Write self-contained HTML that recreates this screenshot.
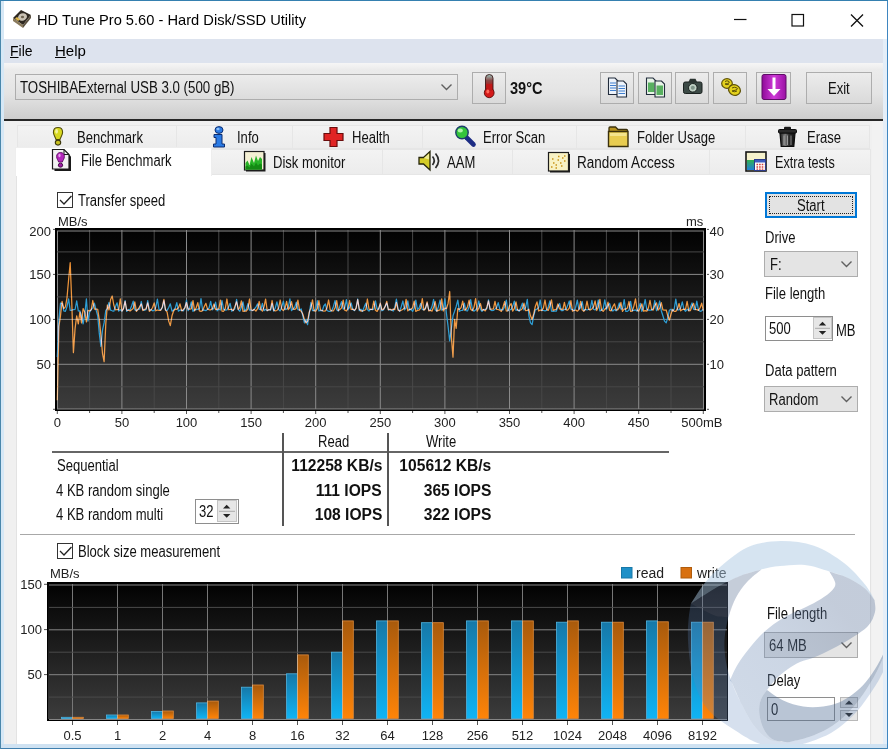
<!DOCTYPE html>
<html><head><meta charset="utf-8"><title>HD Tune Pro 5.60 - Hard Disk/SSD Utility</title>
<style>
html,body{margin:0;padding:0;}
body{width:888px;height:749px;overflow:hidden;position:relative;background:#fff;font-family:"Liberation Sans",sans-serif;color:#000;}
.abs{position:absolute;}
.t{position:absolute;white-space:nowrap;font-size:16px;line-height:18px;transform-origin:0 50%;transform:scaleX(.815);color:#111;margin-top:.8px;}
.b{font-weight:bold;transform:scaleX(.975);}
.r{transform-origin:100% 50%;text-align:right;}
.tab{position:absolute;background:linear-gradient(#f3f3f3,#ececec);border:1px solid #e6e6e6;box-sizing:border-box;}
.btn{position:absolute;box-sizing:border-box;border:1px solid #adadad;background:#e1e1e1;}
.combo{position:absolute;box-sizing:border-box;border:1px solid #adadad;background:#e4e4e4;}
svg{position:absolute;left:0;top:0;}
svg text{font-family:"Liberation Sans",sans-serif;font-size:13px;fill:#222;}
</style></head><body><div id="root" style="position:absolute;left:0;top:0;width:888px;height:749px;will-change:transform">
<!-- window chrome -->
<div class="abs" style="left:0;top:0;width:888px;height:39px;background:#fff"></div>
<div class="abs" style="left:0;top:39px;width:888px;height:23.500px;background:#dde3ee"></div>
<div class="abs" style="left:0;top:62.500px;width:888px;height:56.500px;background:linear-gradient(#f6f6f6,#ebebeb 12%,#e4e4e4 55%,#cdcdcd)"></div>
<div class="abs" style="left:0;top:119px;width:888px;height:1.500px;background:#262626"></div>
<div class="abs" style="left:0;top:120.5px;width:888px;height:630px;background:#f0f0f0"></div>
<!-- tab page -->
<div class="abs" style="left:16px;top:174px;width:855px;height:572px;background:#fff;border-left:1px solid #e3e3e3;border-right:1px solid #e3e3e3;box-sizing:border-box"></div>

<!-- title -->
<svg width="888" height="40" viewBox="0 0 888 40">
 <g transform="translate(12,9)">
  <polygon points="1,9 9,1 19,6 11,16" fill="#2e2820"/>
  <polygon points="1,9 11,16 11,19 1,12" fill="#8a7a5c"/>
  <polygon points="11,16 19,6 19,9 11,19" fill="#5b5140"/>
  <ellipse cx="10.5" cy="8" rx="4.6" ry="3.6" fill="#c9c2b4" transform="rotate(-20 10.5 8)"/>
  <ellipse cx="10.5" cy="8" rx="1.6" ry="1.2" fill="#6d6350"/>
  <polygon points="3,9.5 6,12 8,10.5 5,8" fill="#e0b84a"/>
 </g>
 <line x1="734" y1="19.500" x2="746.500" y2="19.500" stroke="#111" stroke-width="1.2"/>
 <rect x="792" y="14.5" width="11.5" height="11.5" fill="none" stroke="#111" stroke-width="1.2"/>
 <path d="M851 14.5 L863 26.5 M863 14.5 L851 26.5" stroke="#111" stroke-width="1.3" fill="none"/>
</svg>
<div class="t" style="left:36.500px;top:10.200px;font-size:15px;transform:scaleX(.978);color:#000">HD Tune Pro 5.60 - Hard Disk/SSD Utility</div>
<div class="t" style="left:10px;top:41.200px;font-size:15px;transform:scaleX(.93);color:#000"><u>F</u>ile</div>
<div class="t" style="left:55px;top:41.200px;font-size:15px;transform:scaleX(1);color:#000"><u>H</u>elp</div>

<!-- toolbar -->
<div class="combo" style="left:15px;top:74px;width:443px;height:26px;background:linear-gradient(#ececec,#dcdcdc)"></div>
<div class="t" style="left:20px;top:78px;transform:scaleX(.83)">TOSHIBAExternal USB 3.0 (500 gB)</div>
<svg width="888" height="120" viewBox="0 0 888 120">
 <path d="M441.500 84.500 L446.500 89.500 L451.500 84.500" stroke="#606060" stroke-width="1.400" fill="none"/>
</svg>
<div class="btn" style="left:472px;top:72px;width:34px;height:32px;background:linear-gradient(#ececec,#dadada)"></div>
<div class="t b" style="left:510px;top:79px;transform:scaleX(.91)">39°C</div>
<div class="btn" style="left:600px;top:72px;width:34px;height:32px;background:linear-gradient(#ececec,#dadada)"></div>
<div class="btn" style="left:638px;top:72px;width:34px;height:32px;background:linear-gradient(#ececec,#dadada)"></div>
<div class="btn" style="left:675px;top:72px;width:34px;height:32px;background:linear-gradient(#ececec,#dadada)"></div>
<div class="btn" style="left:713px;top:72px;width:34px;height:32px;background:linear-gradient(#ececec,#dadada)"></div>
<div class="btn" style="left:756px;top:72px;width:35px;height:32px;background:linear-gradient(#ececec,#dadada)"></div>
<div class="btn" style="left:806px;top:72px;width:66px;height:32px;background:linear-gradient(#ececec,#dadada)"></div>
<div class="t" style="left:828px;top:79px;">Exit</div>
<svg width="888" height="120" viewBox="0 0 888 120">
 <!-- thermometer -->
 <defs><linearGradient id="thg" x1="0" y1="0" x2="0" y2="1"><stop offset="0" stop-color="#9cc8c0"/><stop offset=".3" stop-color="#8a4a48"/><stop offset=".6" stop-color="#b01818"/><stop offset="1" stop-color="#d81818"/></linearGradient></defs>
 <g>
  <rect x="485.500" y="74.500" width="7.500" height="20" rx="3.700" fill="url(#thg)" stroke="#3a1414" stroke-width="0.900"/>
  <circle cx="489.200" cy="92.800" r="4.900" fill="#d41a1a" stroke="#5a0c0c" stroke-width="0.900"/>
  <rect x="486.400" y="84" width="5.700" height="7" fill="#c01818"/>
  <ellipse cx="487.800" cy="91.500" rx="1.500" ry="2" fill="#ff6a5a"/>
 </g>
 <!-- copy icons -->
 <g>
  <path d="M608.500 78h6.500l3 3v13.500h-9.500z" fill="#eef4fb" stroke="#222c3c" stroke-width="1.100"/>
  <path d="M610 83h6M610 85.500h6M610 88h6M610 90.500h6" stroke="#3f7fd0" stroke-width="1.200"/>
  <path d="M617 81h6.500l3 3v13h-9.500z" fill="#eef4fb" stroke="#222c3c" stroke-width="1.100"/>
  <path d="M618.500 86h6.500M618.500 88.500h6.500M618.500 91h6.500M618.500 93.500h6.500" stroke="#3f7fd0" stroke-width="1.200"/>
 </g>
 <g>
  <path d="M646.500 78h6.500l3 3v13.500h-9.500z" fill="#e8f4e8" stroke="#222c3c" stroke-width="1.100"/>
  <rect x="648" y="82.500" width="6.500" height="9.500" fill="#58b060"/>
  <path d="M655 81h6.500l3 3v13h-9.500z" fill="#e8f4e8" stroke="#222c3c" stroke-width="1.100"/>
  <rect x="656.500" y="85.500" width="6.500" height="9.500" fill="#58b060"/>
 </g>
 <!-- camera -->
 <g>
  <rect x="683.500" y="82" width="18.500" height="11.500" rx="1.800" fill="#3c4a46" stroke="#1a211f" stroke-width="1"/>
  <path d="M688.500 82l1.500-3.200h5.500l1.500 3.200z" fill="#2a3330"/>
  <circle cx="692.800" cy="87.800" r="4.300" fill="#bfd0c4" stroke="#1a211f" stroke-width="1"/>
  <circle cx="692.800" cy="87.800" r="2" fill="#7e9488"/>
 </g>
 <!-- coins/options -->
 <g>
  <ellipse cx="727" cy="83.500" rx="5.300" ry="4.800" fill="#e4d21c" stroke="#5e5208" stroke-width="1.200"/>
  <path d="M725 81.500q2-1.500 4 0t-4 2.500q2 1.500 4 0" stroke="#5e5208" stroke-width="1" fill="none"/>
  <ellipse cx="734.500" cy="90" rx="6" ry="5.300" fill="#e4d21c" stroke="#5e5208" stroke-width="1.200" transform="rotate(25 734.500 90)"/>
  <path d="M732 88q2.500-1.500 5 0t-5 3q2.500 1.500 5 0" stroke="#5e5208" stroke-width="1" fill="none"/>
 </g>
 <!-- purple download -->
 <defs><linearGradient id="pg" x1="0" y1="0" x2="1" y2="0"><stop offset="0" stop-color="#8e0a98"/><stop offset=".5" stop-color="#cf3ad8"/><stop offset="1" stop-color="#9a10a4"/></linearGradient></defs>
 <g>
  <rect x="762" y="74.500" width="24" height="25" rx="2" fill="url(#pg)" stroke="#5e0d66" stroke-width="1"/>
  <path d="M772.500 77.500h3v11.500h5l-6.500 7-6.500-7h5z" fill="#fff"/>
 </g>
</svg>

<!-- tabs row 1 -->
<div class="tab" style="left:17px;top:125px;width:160px;height:24px"></div>
<div class="tab" style="left:176px;top:125px;width:117px;height:24px"></div>
<div class="tab" style="left:292px;top:125px;width:131px;height:24px"></div>
<div class="tab" style="left:422px;top:125px;width:155px;height:24px"></div>
<div class="tab" style="left:576px;top:125px;width:170px;height:24px"></div>
<div class="tab" style="left:745px;top:125px;width:125px;height:24px"></div>
<!-- tabs row 2 -->
<div class="tab" style="left:211px;top:149px;width:172px;height:26px"></div>
<div class="tab" style="left:382px;top:149px;width:131px;height:26px"></div>
<div class="tab" style="left:512px;top:149px;width:198px;height:26px"></div>
<div class="tab" style="left:709px;top:149px;width:162px;height:26px"></div>
<div class="tab" style="left:15px;top:147px;width:197px;height:29px;background:#fff;border-color:#eee;border-bottom:none"></div>

<div class="t" style="left:77px;top:128px">Benchmark</div>
<div class="t" style="left:237px;top:128px">Info</div>
<div class="t" style="left:352px;top:128px">Health</div>
<div class="t" style="left:483px;top:128px">Error Scan</div>
<div class="t" style="left:637px;top:128px">Folder Usage</div>
<div class="t" style="left:807px;top:128px">Erase</div>
<div class="t" style="left:81px;top:151px">File Benchmark</div>
<div class="t" style="left:273px;top:153px">Disk monitor</div>
<div class="t" style="left:447px;top:153px">AAM</div>
<div class="t" style="left:577px;top:153px;transform:scaleX(.845)">Random Access</div>
<div class="t" style="left:775px;top:153px;transform:scaleX(.79)">Extra tests</div>

<svg width="888" height="180" viewBox="0 0 888 180">
 <!-- benchmark bulb -->
 <g>
  <path d="M58 127.500c3 0 4.600 2.200 4.600 4.800c0 2.800-1.800 4.600-2.600 7.200h-4c-0.800-2.600-2.600-4.400-2.600-7.200c0-2.600 1.600-4.800 4.600-4.800z" fill="#d8d820" stroke="#55500c" stroke-width="1.100"/>
  <ellipse cx="56.600" cy="131.300" rx="1.400" ry="2.400" fill="#f4f49c"/>
  <ellipse cx="58" cy="142.600" rx="2.700" ry="2.500" fill="#c8c020" stroke="#3c380c" stroke-width="1.100"/>
 </g>
 <!-- file benchmark -->
 <g>
  <path d="M54.500 151.500h11.500l5 5v14.500h-16.500z" fill="#1a1a1a"/>
  <path d="M52.500 149.500h11.500l5 5v14.500h-16.500z" fill="#f2f2f2" stroke="#1a1a1a" stroke-width="1.200"/>
  <path d="M64 149.500v5h5" fill="none" stroke="#1a1a1a" stroke-width="1"/>
  <path d="M60.500 152.500c2.600 0 3.900 1.900 3.900 4c0 2.200-1.500 3.800-2.100 5.600h-3.600c-0.600-1.800-2.100-3.400-2.100-5.600c0-2.100 1.300-4 3.900-4z" fill="#b428bc" stroke="#5a0c60" stroke-width="0.900"/>
  <ellipse cx="59.500" cy="155.500" rx="1.100" ry="1.700" fill="#e8a0ec"/>
  <ellipse cx="60.500" cy="165.200" rx="2.200" ry="2" fill="#9a1ca2" stroke="#3c0840" stroke-width="0.900"/>
 </g>
 <!-- info i -->
 <g>
  <ellipse cx="219" cy="130" rx="4" ry="3.400" fill="#2a7ae4" stroke="#0c2c70" stroke-width="1"/>
  <ellipse cx="218" cy="129" rx="1.600" ry="1.200" fill="#8cc0f8"/>
  <path d="M214 134.500h8v9.500h2.500v3h-11v-3h2.500v-6.500h-2z" fill="#2a7ae4" stroke="#0c2c70" stroke-width="1"/>
 </g>
 <!-- health cross -->
 <path d="M330 127.500h7v6h6v7h-6v6h-7v-6h-6v-7h6z" fill="#e02424" stroke="#6a0c0c" stroke-width="1.200"/>
 <!-- error scan magnifier -->
 <g>
  <path d="M466.500 137.500l7 7" stroke="#1c2c84" stroke-width="4.600" stroke-linecap="round"/>
  <circle cx="462" cy="132.500" r="6.200" fill="#34c43c" stroke="#1c3c6c" stroke-width="1.400"/>
  <ellipse cx="460.300" cy="130.600" rx="2.600" ry="2" fill="#b0f4a8"/>
 </g>
 <!-- folder -->
 <g>
  <path d="M609 131.500v-3.500q0-1 1-1h5.500l2.500 2.500h8.500q1 0 1 1v1" fill="#b89420" stroke="#3a300c" stroke-width="1.300"/>
  <path d="M608.500 131.500h19.500v15h-19.500z" fill="#e8cc50" stroke="#3a300c" stroke-width="1.400"/>
  <path d="M610 133h16.500v3h-16.500z" fill="#f4e48c"/>
 </g>
 <!-- trash -->
 <defs><linearGradient id="tg" x1="0" y1="0" x2="1" y2="0"><stop offset="0" stop-color="#1a1a1a"/><stop offset=".35" stop-color="#7a7a7a"/><stop offset=".6" stop-color="#2a2a2a"/><stop offset="1" stop-color="#111"/></linearGradient></defs>
 <g>
  <path d="M780 133h15l-1.200 13.500h-12.600z" fill="url(#tg)" stroke="#0c0c0c" stroke-width="1.200"/>
  <path d="M784 135.500v9.500M787.500 135.500v9.500M791 135.500v9.500" stroke="#c8c8c8" stroke-width="0.900" opacity=".7"/>
  <rect x="778.500" y="129.500" width="18" height="3.500" rx="1" fill="#2a2a2a" stroke="#0c0c0c" stroke-width="1"/>
  <rect x="784" y="126.800" width="7" height="3" rx="1" fill="#1c1c1c"/>
 </g>
 <!-- disk monitor -->
 <g>
  <rect x="246" y="153" width="19.500" height="18.500" fill="#1c1c1c"/>
  <rect x="244.500" y="151.500" width="19.500" height="18.500" fill="#f4f0d4" stroke="#1c1c1c" stroke-width="1.200"/>
  <path d="M245.500 169.500v-6.500l2-2.500l2 4.500l2-8l2.500 6l2-7.500l2 5.500l2-4l2 2v10.500z" fill="#28b428"/>
  <path d="M245.500 169.500v-3l2-1l2 2l2-4l2.500 3l2-4l2 3l2-2l2 1v5z" fill="#148a14"/>
 </g>
 <!-- speaker -->
 <g>
  <path d="M419 157.500h4.500l6.500-6v18.500l-6.500-6h-4.500z" fill="#d4cc28" stroke="#26260c" stroke-width="1.300"/>
  <path d="M424 158l5-4.500v6z" fill="#f0ec90"/>
  <path d="M432.500 156.500q3.500 4 0 8.500M435.500 153.500q6 7 0 14.500" stroke="#2c2c2c" stroke-width="1.700" fill="none"/>
 </g>
 <!-- random access -->
 <g>
  <rect x="550" y="154" width="20" height="18.500" fill="#1c1c1c"/>
  <rect x="548.500" y="152.500" width="20" height="18.500" fill="#f8f2c4" stroke="#1c1c1c" stroke-width="1.200"/>
  <path d="M551 167h1.500M553 163h1.500M555.500 165h1.500M557.500 160h1.500M560 163h1.500M562 158h1.500M564 161h1.500M555.500 168h1.500M561 166h1.500M564 156h1.500M558 156.500h1.500M552 159h1.500" stroke="#c89418" stroke-width="1.500"/>
 </g>
 <!-- extra tests -->
 <defs><linearGradient id="eg" x1="0" y1="0" x2="0" y2="1"><stop offset="0" stop-color="#30b050"/><stop offset="1" stop-color="#2080d8"/></linearGradient></defs>
 <g>
  <rect x="746" y="152" width="20" height="19" fill="#f6f2cc" stroke="#161616" stroke-width="1.600"/>
  <rect x="747" y="160" width="7" height="10" fill="url(#eg)"/>
  <rect x="754.500" y="159.500" width="11" height="11" fill="#fff" stroke="#2c3c8c" stroke-width="1"/>
  <rect x="755" y="160" width="10" height="2.500" fill="#3c5cc0"/>
  <path d="M756.500 164.500h8M756.500 167h8M756.500 169.200h8" stroke="#d03c3c" stroke-width="1.300" stroke-dasharray="1.600 1"/>
 </g>
</svg>

<!-- checkboxes -->
<div class="abs" style="left:57px;top:192px;width:16px;height:16px;border:1px solid #333;box-sizing:border-box;background:#fff"></div>
<div class="abs" style="left:57px;top:543px;width:16px;height:16px;border:1px solid #333;box-sizing:border-box;background:#fff"></div>
<svg width="888" height="749" viewBox="0 0 888 749">
 <path d="M60 200l4 4 7.500-8" stroke="#222" stroke-width="1.300" fill="none"/>
 <path d="M60 551l4 4 7.500-8" stroke="#222" stroke-width="1.300" fill="none"/>
</svg>
<div class="t" style="left:78px;top:191px">Transfer speed</div>
<div class="t" style="left:78px;top:542px">Block size measurement</div>

<!-- top chart -->
<svg width="888" height="749" viewBox="0 0 888 749">
 <defs>
  <linearGradient id="bg1" x1="0" y1="0" x2="0" y2="1"><stop offset="0" stop-color="#020202"/><stop offset="1" stop-color="#3c3c3c"/></linearGradient>
  <linearGradient id="gb" x1="0" y1="0" x2="0" y2="1"><stop offset="0" stop-color="#1678a8"/><stop offset="1" stop-color="#10b4f4"/></linearGradient>
  <linearGradient id="go" x1="0" y1="0" x2="0" y2="1"><stop offset="0" stop-color="#a85a0c"/><stop offset="1" stop-color="#ff8408"/></linearGradient>
 </defs>
 <rect x="55" y="228" width="651" height="183" fill="#000"/>
 <rect x="57" y="230" width="647" height="179" fill="url(#bg1)"/>
 <line x1="89.6" y1="230" x2="89.6" y2="409" stroke="#484848" stroke-width="1"/>
<line x1="121.9" y1="230" x2="121.9" y2="409" stroke="#8a8a8a" stroke-width="1"/>
<line x1="154.2" y1="230" x2="154.2" y2="409" stroke="#484848" stroke-width="1"/>
<line x1="186.5" y1="230" x2="186.5" y2="409" stroke="#8a8a8a" stroke-width="1"/>
<line x1="218.8" y1="230" x2="218.8" y2="409" stroke="#484848" stroke-width="1"/>
<line x1="251.1" y1="230" x2="251.1" y2="409" stroke="#8a8a8a" stroke-width="1"/>
<line x1="283.4" y1="230" x2="283.4" y2="409" stroke="#484848" stroke-width="1"/>
<line x1="315.7" y1="230" x2="315.7" y2="409" stroke="#8a8a8a" stroke-width="1"/>
<line x1="348.0" y1="230" x2="348.0" y2="409" stroke="#484848" stroke-width="1"/>
<line x1="380.3" y1="230" x2="380.3" y2="409" stroke="#8a8a8a" stroke-width="1"/>
<line x1="412.6" y1="230" x2="412.6" y2="409" stroke="#484848" stroke-width="1"/>
<line x1="444.9" y1="230" x2="444.9" y2="409" stroke="#8a8a8a" stroke-width="1"/>
<line x1="477.2" y1="230" x2="477.2" y2="409" stroke="#484848" stroke-width="1"/>
<line x1="509.5" y1="230" x2="509.5" y2="409" stroke="#8a8a8a" stroke-width="1"/>
<line x1="541.8" y1="230" x2="541.8" y2="409" stroke="#484848" stroke-width="1"/>
<line x1="574.1" y1="230" x2="574.1" y2="409" stroke="#8a8a8a" stroke-width="1"/>
<line x1="606.4" y1="230" x2="606.4" y2="409" stroke="#484848" stroke-width="1"/>
<line x1="638.7" y1="230" x2="638.7" y2="409" stroke="#8a8a8a" stroke-width="1"/>
<line x1="671.0" y1="230" x2="671.0" y2="409" stroke="#484848" stroke-width="1"/>
<rect x="57.5" y="231" width="646" height="178" fill="none" stroke="#8a8a8a" stroke-width="1"/>
<line x1="57" y1="386.8" x2="704" y2="386.8" stroke="#484848" stroke-width="1"/>
<line x1="57" y1="364.3" x2="704" y2="364.3" stroke="#8a8a8a" stroke-width="1"/>
<line x1="57" y1="341.8" x2="704" y2="341.8" stroke="#484848" stroke-width="1"/>
<line x1="57" y1="319.4" x2="704" y2="319.4" stroke="#8a8a8a" stroke-width="1"/>
<line x1="57" y1="296.9" x2="704" y2="296.9" stroke="#484848" stroke-width="1"/>
<line x1="57" y1="274.4" x2="704" y2="274.4" stroke="#8a8a8a" stroke-width="1"/>
<line x1="57" y1="251.9" x2="704" y2="251.9" stroke="#484848" stroke-width="1"/>
 <polyline points="57.3,357.1 58.9,319.4 60.5,303.2 62.1,303.4 63.8,310.8 65.4,311.4 67.0,306.6 68.6,298.8 70.2,310.4 71.8,310.2 73.4,309.7 75.1,309.5 76.7,300.9 78.3,311.0 79.9,310.9 81.5,315.8 83.1,323.8 84.8,314.0 86.4,298.8 88.0,321.1 89.6,312.2 91.2,309.7 92.8,307.9 94.4,303.1 96.1,310.1 97.7,315.8 99.3,333.7 100.9,346.3 102.5,330.1 104.1,322.9 105.8,310.4 107.4,308.7 109.0,302.4 110.6,310.1 112.2,310.8 113.8,311.2 115.4,306.7 117.1,302.8 118.7,311.1 120.3,309.6 121.9,311.2 123.5,308.4 125.1,300.7 126.7,311.4 128.4,309.5 130.0,309.8 131.6,306.0 133.2,301.2 134.8,309.6 136.4,310.6 138.1,309.1 139.7,309.1 141.3,301.5 142.9,309.6 144.5,310.3 146.1,309.6 147.7,300.6 149.4,310.1 151.0,309.5 152.6,310.8 154.2,310.4 155.8,307.1 157.4,299.2 159.0,309.3 160.7,309.8 162.3,307.7 163.9,300.6 165.5,310.1 167.1,310.4 168.7,307.5 170.3,303.8 172.0,311.2 173.6,309.9 175.2,308.2 176.8,302.7 178.4,311.2 180.0,310.1 181.7,310.1 183.3,310.9 184.9,307.9 186.5,300.2 188.1,310.6 189.7,307.9 191.3,301.9 193.0,311.4 194.6,309.8 196.2,309.6 197.8,309.1 199.4,308.8 201.0,298.7 202.6,310.1 204.3,310.2 205.9,310.7 207.5,309.3 209.1,308.0 210.7,301.4 212.3,309.8 214.0,308.3 215.6,302.2 217.2,310.8 218.8,309.2 220.4,310.0 222.0,300.5 223.6,309.3 225.3,310.1 226.9,309.8 228.5,307.2 230.1,303.3 231.7,311.2 233.3,310.3 234.9,308.7 236.6,299.4 238.2,309.5 239.8,311.2 241.4,307.2 243.0,301.9 244.6,310.8 246.3,309.3 247.9,303.6 249.5,310.2 251.1,310.0 252.7,310.6 254.3,309.0 255.9,307.1 257.6,303.8 259.2,309.2 260.8,310.0 262.4,303.3 264.0,310.7 265.6,309.3 267.2,310.7 268.9,309.5 270.5,310.3 272.1,303.5 273.7,311.1 275.3,308.0 276.9,301.8 278.6,309.6 280.2,310.9 281.8,306.6 283.4,301.2 285.0,309.6 286.6,309.2 288.2,307.4 289.9,298.8 291.5,310.6 293.1,309.0 294.7,307.3 296.3,302.2 297.9,309.6 299.6,310.1 301.2,308.9 302.8,315.8 304.4,322.9 306.0,319.4 307.6,324.7 309.2,314.0 310.9,302.5 312.5,310.5 314.1,310.5 315.7,309.3 317.3,300.7 318.9,311.0 320.5,310.4 322.2,311.0 323.8,306.0 325.4,304.0 327.0,310.5 328.6,311.3 330.2,311.4 331.9,310.5 333.5,306.2 335.1,300.5 336.7,309.7 338.3,311.1 339.9,306.1 341.5,301.6 343.2,309.2 344.8,307.7 346.4,299.7 348.0,309.9 349.6,307.1 351.2,303.0 352.8,309.5 354.5,310.7 356.1,307.7 357.7,299.0 359.3,310.7 360.9,309.1 362.5,311.4 364.2,307.1 365.8,303.2 367.4,309.5 369.0,311.1 370.6,309.2 372.2,309.7 373.8,309.1 375.5,300.9 377.1,309.1 378.7,309.2 380.3,303.9 381.9,310.8 383.5,310.0 385.1,306.4 386.8,303.0 388.4,309.8 390.0,309.8 391.6,309.8 393.2,311.1 394.8,307.2 396.4,299.2 398.1,309.1 399.7,311.4 401.3,306.5 402.9,301.0 404.5,309.9 406.1,308.0 407.8,300.9 409.4,310.1 411.0,309.1 412.6,311.4 414.2,308.1 415.8,300.2 417.4,309.4 419.1,307.9 420.7,303.3 422.3,309.4 423.9,309.8 425.5,308.0 427.1,303.0 428.8,310.2 430.4,310.1 432.0,306.6 433.6,299.5 435.2,309.8 436.8,311.2 438.4,306.9 440.1,300.0 441.7,310.2 443.3,309.1 444.9,298.8 446.5,314.0 448.1,326.5 449.7,340.9 451.4,328.3 453.0,315.8 454.6,311.3 456.2,306.4 457.8,300.1 459.4,311.3 461.1,310.5 462.7,310.4 464.3,303.2 465.9,310.6 467.5,310.9 469.1,307.0 470.7,299.7 472.4,309.5 474.0,311.2 475.6,310.1 477.2,307.9 478.8,301.0 480.4,309.1 482.0,311.4 483.7,309.3 485.3,309.5 486.9,308.6 488.5,299.9 490.1,309.4 491.7,310.6 493.4,310.5 495.0,309.1 496.6,307.7 498.2,302.6 499.8,309.1 501.4,309.9 503.0,309.9 504.7,306.5 506.3,300.1 507.9,310.8 509.5,309.7 511.1,309.7 512.7,306.1 514.3,301.1 516.0,310.3 517.6,309.7 519.2,311.3 520.8,307.5 522.4,303.1 524.0,310.0 525.6,307.3 527.3,299.3 528.9,315.8 530.5,322.9 532.1,324.7 533.7,315.8 535.3,309.8 537.0,309.1 538.6,307.7 540.2,300.0 541.8,310.4 543.4,310.5 545.0,310.9 546.6,310.4 548.3,306.7 549.9,300.9 551.5,311.2 553.1,311.3 554.7,311.2 556.3,311.2 557.9,307.1 559.6,303.5 561.2,310.6 562.8,310.7 564.4,309.3 566.0,309.5 567.6,305.6 569.3,301.0 570.9,309.2 572.5,309.6 574.1,310.7 575.7,307.2 577.3,300.1 578.9,309.4 580.6,307.5 582.2,301.5 583.8,310.6 585.4,309.5 587.0,309.9 588.6,309.5 590.2,308.8 591.9,300.3 593.5,309.3 595.1,310.0 596.7,307.6 598.3,300.0 599.9,310.8 601.6,310.2 603.2,308.5 604.8,299.8 606.4,309.7 608.0,305.6 609.6,303.4 611.2,309.3 612.9,311.0 614.5,309.4 616.1,310.9 617.7,308.2 619.3,303.0 620.9,309.1 622.5,309.0 624.2,299.7 625.8,311.3 627.4,311.4 629.0,310.0 630.6,301.3 632.2,310.6 633.9,310.3 635.5,309.9 637.1,311.2 638.7,307.7 640.3,303.3 641.9,311.3 643.5,307.6 645.2,299.5 646.8,309.4 648.4,310.2 650.0,310.2 651.6,310.2 653.2,308.4 654.8,300.5 656.5,310.7 658.1,307.3 659.7,301.0 661.3,310.7 662.9,315.8 664.5,321.1 666.2,322.9 667.8,317.6 669.4,310.2 671.0,309.2 672.6,311.0 674.2,309.1 675.8,299.1 677.5,309.9 679.1,309.8 680.7,307.9 682.3,301.8 683.9,309.2 685.5,311.3 687.1,309.3 688.8,310.5 690.4,307.3 692.0,302.9 693.6,309.3 695.2,309.6 696.8,301.1 698.5,310.1 700.1,311.3 701.7,310.8 703.3,309.3" fill="none" stroke="#2e9ed4" stroke-width="1.250" stroke-linejoin="round"/>
 <polyline points="57.3,400.3 58.9,326.5 60.5,315.8 62.1,301.4 63.8,308.6 65.4,306.8 67.0,297.8 68.6,279.8 70.2,262.7 71.8,303.2 73.4,352.6 75.1,328.3 76.7,315.8 78.3,323.8 79.9,312.2 81.5,322.9 83.1,308.6 84.8,312.2 86.4,322.0 88.0,310.4 89.6,310.9 91.2,309.8 92.8,300.5 94.4,309.0 96.1,309.0 97.7,309.4 99.3,319.4 100.9,335.5 102.5,353.5 104.1,361.6 105.8,323.8 107.4,305.0 109.0,310.0 110.6,299.6 112.2,296.0 113.8,305.0 115.4,309.9 117.1,309.5 118.7,309.6 120.3,298.9 121.9,311.1 123.5,308.8 125.1,301.4 126.7,310.1 128.4,310.3 130.0,311.0 131.6,309.7 133.2,308.5 134.8,301.8 136.4,311.4 138.1,309.3 139.7,306.6 141.3,304.0 142.9,310.5 144.5,309.4 146.1,308.7 147.7,302.9 149.4,311.4 151.0,310.0 152.6,307.5 154.2,302.9 155.8,310.8 157.4,310.0 159.0,310.5 160.7,310.3 162.3,306.9 163.9,299.4 165.5,309.9 167.1,312.2 168.7,321.1 170.3,325.6 172.0,315.8 173.6,311.0 175.2,309.1 176.8,309.3 178.4,307.9 180.0,303.8 181.7,310.9 183.3,309.7 184.9,307.7 186.5,302.5 188.1,309.2 189.7,309.1 191.3,308.9 193.0,300.7 194.6,310.8 196.2,307.8 197.8,302.6 199.4,310.8 201.0,311.3 202.6,310.7 204.3,306.6 205.9,303.3 207.5,309.1 209.1,309.8 210.7,309.8 212.3,308.7 214.0,304.0 215.6,309.7 217.2,309.1 218.8,308.8 220.4,300.1 222.0,311.1 223.6,311.3 225.3,308.4 226.9,299.0 228.5,309.7 230.1,309.5 231.7,309.2 233.3,310.6 234.9,306.4 236.6,301.8 238.2,309.3 239.8,307.5 241.4,300.9 243.0,311.3 244.6,311.2 246.3,311.2 247.9,308.8 249.5,299.0 251.1,310.0 252.7,310.4 254.3,309.4 255.9,311.2 257.6,308.6 259.2,301.5 260.8,309.1 262.4,311.2 264.0,306.9 265.6,299.2 267.2,310.7 268.9,309.8 270.5,309.6 272.1,300.5 273.7,310.2 275.3,310.8 276.9,310.5 278.6,308.2 280.2,300.0 281.8,309.3 283.4,310.5 285.0,308.3 286.6,301.4 288.2,309.7 289.9,307.5 291.5,301.6 293.1,309.2 294.7,309.4 296.3,308.2 297.9,300.2 299.6,310.3 301.2,311.3 302.8,314.0 304.4,319.4 306.0,322.9 307.6,321.1 309.2,312.2 310.9,307.9 312.5,299.9 314.1,310.9 315.7,311.1 317.3,308.7 318.9,300.7 320.5,309.9 322.2,310.5 323.8,311.2 325.4,311.0 327.0,307.8 328.6,300.0 330.2,309.7 331.9,311.0 333.5,310.8 335.1,307.8 336.7,300.7 338.3,310.5 339.9,309.5 341.5,308.1 343.2,300.2 344.8,310.3 346.4,311.0 348.0,308.4 349.6,300.5 351.2,309.5 352.8,309.1 354.5,310.3 356.1,308.4 357.7,299.6 359.3,309.2 360.9,311.1 362.5,310.8 364.2,310.5 365.8,309.5 367.4,299.0 369.0,309.2 370.6,309.4 372.2,309.5 373.8,301.1 375.5,310.3 377.1,311.4 378.7,308.4 380.3,303.1 381.9,309.8 383.5,309.2 385.1,306.7 386.8,301.3 388.4,309.8 390.0,309.1 391.6,310.2 393.2,309.1 394.8,309.7 396.4,302.5 398.1,310.1 399.7,311.0 401.3,310.2 402.9,309.2 404.5,308.1 406.1,299.4 407.8,310.9 409.4,309.4 411.0,309.1 412.6,307.7 414.2,301.2 415.8,311.4 417.4,310.5 419.1,310.1 420.7,308.0 422.3,298.7 423.9,310.2 425.5,308.7 427.1,301.8 428.8,310.8 430.4,310.3 432.0,311.1 433.6,307.3 435.2,301.5 436.8,311.2 438.4,310.4 440.1,309.8 441.7,298.8 443.3,311.0 444.9,308.1 446.5,308.6 448.1,303.2 449.7,291.5 451.4,337.3 453.0,357.1 454.6,319.4 456.2,328.3 457.8,308.6 459.4,309.4 461.1,307.6 462.7,301.2 464.3,310.1 465.9,309.4 467.5,306.7 469.1,300.1 470.7,309.2 472.4,310.7 474.0,307.3 475.6,298.7 477.2,311.1 478.8,308.0 480.4,303.5 482.0,310.1 483.7,309.7 485.3,310.9 486.9,306.9 488.5,301.0 490.1,309.2 491.7,309.1 493.4,308.9 495.0,301.3 496.6,309.4 498.2,309.5 499.8,310.3 501.4,311.4 503.0,307.0 504.7,301.5 506.3,311.0 507.9,310.9 509.5,305.8 511.1,303.5 512.7,311.1 514.3,308.7 516.0,301.9 517.6,310.2 519.2,310.4 520.8,310.0 522.4,308.6 524.0,303.1 525.6,310.6 527.3,310.5 528.9,309.2 530.5,315.8 532.1,319.4 533.7,314.0 535.3,306.5 537.0,301.9 538.6,311.0 540.2,310.0 541.8,310.6 543.4,307.9 545.0,300.0 546.6,309.5 548.3,310.4 549.9,306.0 551.5,299.9 553.1,310.4 554.7,309.7 556.3,309.4 557.9,304.0 559.6,309.0 561.2,309.2 562.8,309.7 564.4,302.4 566.0,309.8 567.6,310.1 569.3,308.2 570.9,300.6 572.5,311.1 574.1,310.5 575.7,310.0 577.3,311.2 578.9,309.6 580.6,301.3 582.2,309.9 583.8,311.4 585.4,309.2 587.0,301.1 588.6,309.1 590.2,310.1 591.9,309.0 593.5,306.8 595.1,300.8 596.7,310.5 598.3,307.2 599.9,299.4 601.6,310.0 603.2,311.3 604.8,309.1 606.4,308.1 608.0,302.1 609.6,310.3 611.2,310.8 612.9,306.5 614.5,303.9 616.1,310.0 617.7,309.9 619.3,307.7 620.9,302.4 622.5,311.3 624.2,309.0 625.8,309.1 627.4,307.9 629.0,301.5 630.6,311.3 632.2,311.2 633.9,306.1 635.5,298.9 637.1,310.0 638.7,311.2 640.3,307.8 641.9,303.8 643.5,311.1 645.2,310.6 646.8,311.1 648.4,307.9 650.0,300.4 651.6,309.5 653.2,310.1 654.8,305.5 656.5,302.8 658.1,310.2 659.7,308.4 661.3,302.6 662.9,309.8 664.5,310.1 666.2,310.0 667.8,315.8 669.4,320.2 671.0,314.0 672.6,309.3 674.2,311.3 675.8,311.3 677.5,308.7 679.1,303.5 680.7,310.8 682.3,309.6 683.9,309.2 685.5,309.5 687.1,301.4 688.8,310.9 690.4,310.6 692.0,306.5 693.6,303.4 695.2,309.4 696.8,309.6 698.5,310.4 700.1,307.7 701.7,303.2 703.3,310.6" fill="none" stroke="#ee8c2a" stroke-width="1.250" stroke-linejoin="round" style="mix-blend-mode:screen"/>
 <line x1="57.3" y1="411" x2="57.3" y2="414" stroke="#555" stroke-width="1"/>
<line x1="89.6" y1="411" x2="89.6" y2="413" stroke="#555" stroke-width="1"/>
<line x1="121.9" y1="411" x2="121.9" y2="414" stroke="#555" stroke-width="1"/>
<line x1="154.2" y1="411" x2="154.2" y2="413" stroke="#555" stroke-width="1"/>
<line x1="186.5" y1="411" x2="186.5" y2="414" stroke="#555" stroke-width="1"/>
<line x1="218.8" y1="411" x2="218.8" y2="413" stroke="#555" stroke-width="1"/>
<line x1="251.1" y1="411" x2="251.1" y2="414" stroke="#555" stroke-width="1"/>
<line x1="283.4" y1="411" x2="283.4" y2="413" stroke="#555" stroke-width="1"/>
<line x1="315.7" y1="411" x2="315.7" y2="414" stroke="#555" stroke-width="1"/>
<line x1="348.0" y1="411" x2="348.0" y2="413" stroke="#555" stroke-width="1"/>
<line x1="380.3" y1="411" x2="380.3" y2="414" stroke="#555" stroke-width="1"/>
<line x1="412.6" y1="411" x2="412.6" y2="413" stroke="#555" stroke-width="1"/>
<line x1="444.9" y1="411" x2="444.9" y2="414" stroke="#555" stroke-width="1"/>
<line x1="477.2" y1="411" x2="477.2" y2="413" stroke="#555" stroke-width="1"/>
<line x1="509.5" y1="411" x2="509.5" y2="414" stroke="#555" stroke-width="1"/>
<line x1="541.8" y1="411" x2="541.8" y2="413" stroke="#555" stroke-width="1"/>
<line x1="574.1" y1="411" x2="574.1" y2="414" stroke="#555" stroke-width="1"/>
<line x1="606.4" y1="411" x2="606.4" y2="413" stroke="#555" stroke-width="1"/>
<line x1="638.7" y1="411" x2="638.7" y2="414" stroke="#555" stroke-width="1"/>
<line x1="671.0" y1="411" x2="671.0" y2="413" stroke="#555" stroke-width="1"/>
<line x1="703.3" y1="411" x2="703.3" y2="414" stroke="#555" stroke-width="1"/>
<line x1="53" y1="409.3" x2="55" y2="409.3" stroke="#555" stroke-width="1"/>
<line x1="707" y1="409.3" x2="709" y2="409.3" stroke="#555" stroke-width="1"/>
<line x1="53" y1="364.3" x2="55" y2="364.3" stroke="#555" stroke-width="1"/>
<line x1="707" y1="364.3" x2="709" y2="364.3" stroke="#555" stroke-width="1"/>
<line x1="53" y1="319.4" x2="55" y2="319.4" stroke="#555" stroke-width="1"/>
<line x1="707" y1="319.4" x2="709" y2="319.4" stroke="#555" stroke-width="1"/>
<line x1="53" y1="274.4" x2="55" y2="274.4" stroke="#555" stroke-width="1"/>
<line x1="707" y1="274.4" x2="709" y2="274.4" stroke="#555" stroke-width="1"/>
<line x1="53" y1="229.4" x2="55" y2="229.4" stroke="#555" stroke-width="1"/>
<line x1="707" y1="229.4" x2="709" y2="229.4" stroke="#555" stroke-width="1"/>
 <text x="51" y="235.7" text-anchor="end">200</text>
<text x="51" y="279.2" text-anchor="end">150</text>
<text x="51" y="324.09999999999997" text-anchor="end">100</text>
<text x="51" y="368.9" text-anchor="end">50</text>
<text x="709.5" y="235.7">40</text>
<text x="709.5" y="279.2">30</text>
<text x="709.5" y="324.09999999999997">20</text>
<text x="709.5" y="368.9">10</text>
<text x="57.3" y="427" text-anchor="middle">0</text>
<text x="121.9" y="427" text-anchor="middle">50</text>
<text x="186.5" y="427" text-anchor="middle">100</text>
<text x="251.1" y="427" text-anchor="middle">150</text>
<text x="315.7" y="427" text-anchor="middle">200</text>
<text x="380.3" y="427" text-anchor="middle">250</text>
<text x="444.9" y="427" text-anchor="middle">300</text>
<text x="509.5" y="427" text-anchor="middle">350</text>
<text x="574.1" y="427" text-anchor="middle">400</text>
<text x="638.7" y="427" text-anchor="middle">450</text>
<text x="681.3" y="427">500mB</text>
 <text x="58" y="226">MB/s</text>
 <text x="686" y="226">ms</text>

 <!-- bottom chart -->
 <rect x="47" y="582" width="681" height="139" fill="#000"/>
 <rect x="48" y="584" width="679" height="135" fill="url(#bg1)"/>
 <line x1="72.5" y1="584" x2="72.5" y2="719" stroke="#777" stroke-width="1"/>
<line x1="117.5" y1="584" x2="117.5" y2="719" stroke="#777" stroke-width="1"/>
<line x1="162.5" y1="584" x2="162.5" y2="719" stroke="#777" stroke-width="1"/>
<line x1="207.5" y1="584" x2="207.5" y2="719" stroke="#777" stroke-width="1"/>
<line x1="252.5" y1="584" x2="252.5" y2="719" stroke="#777" stroke-width="1"/>
<line x1="297.5" y1="584" x2="297.5" y2="719" stroke="#777" stroke-width="1"/>
<line x1="342.5" y1="584" x2="342.5" y2="719" stroke="#777" stroke-width="1"/>
<line x1="387.5" y1="584" x2="387.5" y2="719" stroke="#777" stroke-width="1"/>
<line x1="432.5" y1="584" x2="432.5" y2="719" stroke="#777" stroke-width="1"/>
<line x1="477.5" y1="584" x2="477.5" y2="719" stroke="#777" stroke-width="1"/>
<line x1="522.5" y1="584" x2="522.5" y2="719" stroke="#777" stroke-width="1"/>
<line x1="567.5" y1="584" x2="567.5" y2="719" stroke="#777" stroke-width="1"/>
<line x1="612.5" y1="584" x2="612.5" y2="719" stroke="#777" stroke-width="1"/>
<line x1="657.5" y1="584" x2="657.5" y2="719" stroke="#777" stroke-width="1"/>
<line x1="702.5" y1="584" x2="702.5" y2="719" stroke="#777" stroke-width="1"/>
<line x1="49" y1="719.5" x2="727" y2="719.5" stroke="#858585" stroke-width="1"/>
<line x1="49" y1="697.1" x2="727" y2="697.1" stroke="#4a4a4a" stroke-width="1"/>
<line x1="49" y1="674.7" x2="727" y2="674.7" stroke="#858585" stroke-width="1"/>
<line x1="49" y1="652.2" x2="727" y2="652.2" stroke="#4a4a4a" stroke-width="1"/>
<line x1="49" y1="629.8" x2="727" y2="629.8" stroke="#858585" stroke-width="1"/>
<line x1="49" y1="607.4" x2="727" y2="607.4" stroke="#4a4a4a" stroke-width="1"/>
<line x1="49" y1="585.0" x2="727" y2="585.0" stroke="#858585" stroke-width="1"/>
 <rect x="61.5" y="717.3" width="11" height="1.2" fill="url(#gb)" stroke="#4fb4e0" stroke-width="0.8"/>
<rect x="72.5" y="717.3" width="10.8" height="1.2" fill="url(#go)" stroke="#e08a3a" stroke-width="0.8"/>
<line x1="72.5" y1="717.3" x2="72.5" y2="718.5" stroke="#cfd8dc" stroke-opacity=".45" stroke-width="1"/>
<rect x="106.5" y="715.0" width="11" height="3.5" fill="url(#gb)" stroke="#4fb4e0" stroke-width="0.8"/>
<rect x="117.5" y="715.0" width="10.8" height="3.5" fill="url(#go)" stroke="#e08a3a" stroke-width="0.8"/>
<line x1="117.5" y1="715.0" x2="117.5" y2="718.5" stroke="#cfd8dc" stroke-opacity=".45" stroke-width="1"/>
<rect x="151.5" y="711.4" width="11" height="7.1" fill="url(#gb)" stroke="#4fb4e0" stroke-width="0.8"/>
<rect x="162.5" y="711.0" width="10.8" height="7.5" fill="url(#go)" stroke="#e08a3a" stroke-width="0.8"/>
<line x1="162.5" y1="711.0" x2="162.5" y2="718.5" stroke="#cfd8dc" stroke-opacity=".45" stroke-width="1"/>
<rect x="196.5" y="702.9" width="11" height="15.6" fill="url(#gb)" stroke="#4fb4e0" stroke-width="0.8"/>
<rect x="207.5" y="701.1" width="10.8" height="17.4" fill="url(#go)" stroke="#e08a3a" stroke-width="0.8"/>
<line x1="207.5" y1="701.1" x2="207.5" y2="718.5" stroke="#cfd8dc" stroke-opacity=".45" stroke-width="1"/>
<rect x="241.5" y="687.2" width="11" height="31.3" fill="url(#gb)" stroke="#4fb4e0" stroke-width="0.8"/>
<rect x="252.5" y="685.0" width="10.8" height="33.5" fill="url(#go)" stroke="#e08a3a" stroke-width="0.8"/>
<line x1="252.5" y1="685.0" x2="252.5" y2="718.5" stroke="#cfd8dc" stroke-opacity=".45" stroke-width="1"/>
<rect x="286.5" y="673.8" width="11" height="44.7" fill="url(#gb)" stroke="#4fb4e0" stroke-width="0.8"/>
<rect x="297.5" y="654.9" width="10.8" height="63.6" fill="url(#go)" stroke="#e08a3a" stroke-width="0.8"/>
<line x1="297.5" y1="654.9" x2="297.5" y2="718.5" stroke="#cfd8dc" stroke-opacity=".45" stroke-width="1"/>
<rect x="331.5" y="652.2" width="11" height="66.2" fill="url(#gb)" stroke="#4fb4e0" stroke-width="0.8"/>
<rect x="342.5" y="620.9" width="10.8" height="97.6" fill="url(#go)" stroke="#e08a3a" stroke-width="0.8"/>
<line x1="342.5" y1="620.9" x2="342.5" y2="718.5" stroke="#cfd8dc" stroke-opacity=".45" stroke-width="1"/>
<rect x="376.5" y="620.9" width="11" height="97.6" fill="url(#gb)" stroke="#4fb4e0" stroke-width="0.8"/>
<rect x="387.5" y="620.9" width="10.8" height="97.6" fill="url(#go)" stroke="#e08a3a" stroke-width="0.8"/>
<line x1="387.5" y1="620.9" x2="387.5" y2="718.5" stroke="#cfd8dc" stroke-opacity=".45" stroke-width="1"/>
<rect x="421.5" y="622.7" width="11" height="95.8" fill="url(#gb)" stroke="#4fb4e0" stroke-width="0.8"/>
<rect x="432.5" y="622.7" width="10.8" height="95.8" fill="url(#go)" stroke="#e08a3a" stroke-width="0.8"/>
<line x1="432.5" y1="622.7" x2="432.5" y2="718.5" stroke="#cfd8dc" stroke-opacity=".45" stroke-width="1"/>
<rect x="466.5" y="620.9" width="11" height="97.6" fill="url(#gb)" stroke="#4fb4e0" stroke-width="0.8"/>
<rect x="477.5" y="620.9" width="10.8" height="97.6" fill="url(#go)" stroke="#e08a3a" stroke-width="0.8"/>
<line x1="477.5" y1="620.9" x2="477.5" y2="718.5" stroke="#cfd8dc" stroke-opacity=".45" stroke-width="1"/>
<rect x="511.5" y="620.9" width="11" height="97.6" fill="url(#gb)" stroke="#4fb4e0" stroke-width="0.8"/>
<rect x="522.5" y="620.9" width="10.8" height="97.6" fill="url(#go)" stroke="#e08a3a" stroke-width="0.8"/>
<line x1="522.5" y1="620.9" x2="522.5" y2="718.5" stroke="#cfd8dc" stroke-opacity=".45" stroke-width="1"/>
<rect x="556.5" y="622.2" width="11" height="96.3" fill="url(#gb)" stroke="#4fb4e0" stroke-width="0.8"/>
<rect x="567.5" y="620.9" width="10.8" height="97.6" fill="url(#go)" stroke="#e08a3a" stroke-width="0.8"/>
<line x1="567.5" y1="620.9" x2="567.5" y2="718.5" stroke="#cfd8dc" stroke-opacity=".45" stroke-width="1"/>
<rect x="601.5" y="622.2" width="11" height="96.3" fill="url(#gb)" stroke="#4fb4e0" stroke-width="0.8"/>
<rect x="612.5" y="622.2" width="10.8" height="96.3" fill="url(#go)" stroke="#e08a3a" stroke-width="0.8"/>
<line x1="612.5" y1="622.2" x2="612.5" y2="718.5" stroke="#cfd8dc" stroke-opacity=".45" stroke-width="1"/>
<rect x="646.5" y="620.9" width="11" height="97.6" fill="url(#gb)" stroke="#4fb4e0" stroke-width="0.8"/>
<rect x="657.5" y="621.8" width="10.8" height="96.7" fill="url(#go)" stroke="#e08a3a" stroke-width="0.8"/>
<line x1="657.5" y1="620.9" x2="657.5" y2="718.5" stroke="#cfd8dc" stroke-opacity=".45" stroke-width="1"/>
<rect x="691.5" y="622.2" width="11" height="96.3" fill="url(#gb)" stroke="#4fb4e0" stroke-width="0.8"/>
<rect x="702.5" y="622.2" width="10.8" height="96.3" fill="url(#go)" stroke="#e08a3a" stroke-width="0.8"/>
<line x1="702.5" y1="622.2" x2="702.5" y2="718.5" stroke="#cfd8dc" stroke-opacity=".45" stroke-width="1"/>
 <text x="72.5" y="739.5" text-anchor="middle">0.5</text>
<line x1="72.5" y1="721" x2="72.5" y2="725" stroke="#555" stroke-width="1"/>
<text x="117.5" y="739.5" text-anchor="middle">1</text>
<line x1="117.5" y1="721" x2="117.5" y2="725" stroke="#555" stroke-width="1"/>
<text x="162.5" y="739.5" text-anchor="middle">2</text>
<line x1="162.5" y1="721" x2="162.5" y2="725" stroke="#555" stroke-width="1"/>
<text x="207.5" y="739.5" text-anchor="middle">4</text>
<line x1="207.5" y1="721" x2="207.5" y2="725" stroke="#555" stroke-width="1"/>
<text x="252.5" y="739.5" text-anchor="middle">8</text>
<line x1="252.5" y1="721" x2="252.5" y2="725" stroke="#555" stroke-width="1"/>
<text x="297.5" y="739.5" text-anchor="middle">16</text>
<line x1="297.5" y1="721" x2="297.5" y2="725" stroke="#555" stroke-width="1"/>
<text x="342.5" y="739.5" text-anchor="middle">32</text>
<line x1="342.5" y1="721" x2="342.5" y2="725" stroke="#555" stroke-width="1"/>
<text x="387.5" y="739.5" text-anchor="middle">64</text>
<line x1="387.5" y1="721" x2="387.5" y2="725" stroke="#555" stroke-width="1"/>
<text x="432.5" y="739.5" text-anchor="middle">128</text>
<line x1="432.5" y1="721" x2="432.5" y2="725" stroke="#555" stroke-width="1"/>
<text x="477.5" y="739.5" text-anchor="middle">256</text>
<line x1="477.5" y1="721" x2="477.5" y2="725" stroke="#555" stroke-width="1"/>
<text x="522.5" y="739.5" text-anchor="middle">512</text>
<line x1="522.5" y1="721" x2="522.5" y2="725" stroke="#555" stroke-width="1"/>
<text x="567.5" y="739.5" text-anchor="middle">1024</text>
<line x1="567.5" y1="721" x2="567.5" y2="725" stroke="#555" stroke-width="1"/>
<text x="612.5" y="739.5" text-anchor="middle">2048</text>
<line x1="612.5" y1="721" x2="612.5" y2="725" stroke="#555" stroke-width="1"/>
<text x="657.5" y="739.5" text-anchor="middle">4096</text>
<line x1="657.5" y1="721" x2="657.5" y2="725" stroke="#555" stroke-width="1"/>
<text x="702.5" y="739.5" text-anchor="middle">8192</text>
<line x1="702.5" y1="721" x2="702.5" y2="725" stroke="#555" stroke-width="1"/>
<text x="42" y="589.0" text-anchor="end">150</text>
<line x1="44" y1="584.3" x2="47" y2="584.3" stroke="#555" stroke-width="1"/>
<text x="42" y="634.3000000000001" text-anchor="end">100</text>
<line x1="44" y1="629.6" x2="47" y2="629.6" stroke="#555" stroke-width="1"/>
<text x="42" y="679.3000000000001" text-anchor="end">50</text>
<line x1="44" y1="674.6" x2="47" y2="674.6" stroke="#555" stroke-width="1"/>
 <text x="50" y="578">MB/s</text>
 <rect x="621.500" y="567.500" width="10.500" height="10.500" fill="#1e90c8" stroke="#1878a8" stroke-width="1"/>
 <text x="636" y="578" style="font-size:14px">read</text>
 <rect x="681" y="567.500" width="10.500" height="10.500" fill="#d87010" stroke="#b05c0c" stroke-width="1"/>
 <text x="697" y="578" style="font-size:14px">write</text>
</svg>

<!-- results table -->
<div class="abs" style="left:52px;top:450.500px;width:617px;height:2px;background:#666"></div>
<div class="abs" style="left:281.500px;top:433px;width:2px;height:93px;background:#555"></div>
<div class="abs" style="left:386.500px;top:433px;width:2px;height:93px;background:#555"></div>
<div class="abs" style="left:20px;top:534px;width:835px;height:1px;background:#a8a8a8"></div>
<div class="t" style="left:318px;top:432px">Read</div>
<div class="t" style="left:426px;top:432px">Write</div>
<div class="t" style="left:57px;top:456px">Sequential</div>
<div class="t" style="left:56px;top:481px">4 KB random single</div>
<div class="t" style="left:56px;top:505px">4 KB random multi</div>
<div class="t b r" style="right:506px;top:456px">112258 KB/s</div>
<div class="t b r" style="right:506px;top:481px">111 IOPS</div>
<div class="t b r" style="right:506px;top:505px">108 IOPS</div>
<div class="t b r" style="right:397px;top:456px">105612 KB/s</div>
<div class="t b r" style="right:397px;top:481px">365 IOPS</div>
<div class="t b r" style="right:397px;top:505px">322 IOPS</div>
<!-- spin 32 -->
<div class="abs" style="left:195px;top:499px;width:44px;height:25px;border:1px solid #8e8e8e;box-sizing:border-box;background:#fff"></div>
<div class="abs" style="left:217px;top:500px;width:20px;height:22px;background:#e6e6e6;border:1px solid #c4c4c4;box-sizing:border-box"></div>
<div class="t" style="left:199px;top:502px">32</div>
<svg width="888" height="749" viewBox="0 0 888 749">
 <path d="M223 508.500l3.700-3.700 3.700 3.700z M223 514l3.700 3.700 3.700-3.700z" fill="#222"/>
 <path d="M219 511.300h16" stroke="#aaa" stroke-width="1"/>
</svg>

<!-- right controls -->
<div class="abs" style="left:765px;top:192px;width:92px;height:26px;box-sizing:border-box;border:2px solid #0078d7;background:#e3e3e3"></div>
<div class="abs" style="left:769px;top:196px;width:84px;height:18px;box-sizing:border-box;border:1px dotted #222"></div>
<div class="t" style="left:797px;top:196px">Start</div>
<div class="t" style="left:765px;top:228px">Drive</div>
<div class="combo" style="left:764px;top:251px;width:94px;height:26px"></div>
<div class="t" style="left:770px;top:255px">F:</div>
<div class="t" style="left:765px;top:284px">File length</div>
<div class="abs" style="left:765px;top:316px;width:68px;height:25px;border:1px solid #8e8e8e;box-sizing:border-box;background:#fff"></div>
<div class="abs" style="left:813px;top:317px;width:19px;height:22px;background:#e6e6e6;border:1px solid #c4c4c4;box-sizing:border-box"></div>
<div class="t" style="left:769px;top:319px">500</div>
<div class="t" style="left:836px;top:321px">MB</div>
<div class="t" style="left:765px;top:361px">Data pattern</div>
<div class="combo" style="left:764px;top:386px;width:94px;height:26px"></div>
<div class="t" style="left:769px;top:390px">Random</div>

<div class="t" style="left:767px;top:604px">File length</div>
<div class="combo" style="left:764px;top:632px;width:94px;height:26px"></div>
<div class="t" style="left:769px;top:636px">64 MB</div>
<div class="t" style="left:767px;top:671px">Delay</div>
<div class="abs" style="left:767px;top:697px;width:68px;height:24px;border:1px solid #8e8e8e;box-sizing:border-box;background:#fff"></div>
<div class="t" style="left:771px;top:700px">0</div>
<div class="abs" style="left:840px;top:697px;width:18px;height:11px;background:#e6e6e6;border:1px solid #b8b8b8;box-sizing:border-box"></div>
<div class="abs" style="left:840px;top:709.500px;width:18px;height:11.500px;background:#e6e6e6;border:1px solid #b8b8b8;box-sizing:border-box"></div>
<svg width="888" height="749" viewBox="0 0 888 749">
 <path d="M841.500 261.500l5 5 5-5M841.500 396.500l5 5 5-5M841.500 642.500l5 5 5-5" stroke="#606060" stroke-width="1.400" fill="none"/>
 <path d="M818.800 325.500l3.700-3.700 3.700 3.700z M818.800 331l3.700 3.700 3.700-3.700z" fill="#222"/>
 <path d="M815 328.300h15" stroke="#aaa" stroke-width="1"/>
 <path d="M845 704.500l4-4 4 4z M845 713l4 4 4-4z" fill="#222"/>
</svg>

<!-- window borders -->
<div class="abs" style="left:872px;top:120.500px;width:11px;height:626px;background:#f2f2f2"></div>
<!-- watermark -->
<svg width="888" height="749" viewBox="0 0 888 749">
 <defs><linearGradient id="wg" gradientUnits="userSpaceOnUse" x1="738" y1="700" x2="840" y2="610"><stop offset="0" stop-color="rgb(110,140,182)" stop-opacity=".33"/><stop offset=".45" stop-color="rgb(105,135,178)" stop-opacity=".34"/><stop offset="1" stop-color="rgb(85,110,150)" stop-opacity=".35"/></linearGradient></defs>
 <path d="M690.8 603.8 C693.3 600.1 700.3 588.3 706.0 581.5 C711.7 574.7 717.7 568.7 725.0 562.8 C732.3 556.9 740.7 549.9 750.0 546.3 C759.3 542.7 770.3 541.1 781.0 541.0 C791.7 540.9 803.5 542.1 814.0 545.8 C824.5 549.5 835.5 556.5 844.0 563.0 C852.5 569.5 859.9 578.3 865.0 584.5 C870.1 590.7 872.9 597.4 874.5 600.0 L874.5 600.0 C872.9 598.0 869.2 592.0 864.6 588.2 C860.0 584.5 852.9 580.3 847.0 577.5 C841.1 574.7 836.4 573.5 829.4 571.4 C822.4 569.3 813.2 565.9 805.0 565.0 C796.8 564.1 787.3 565.3 780.0 566.0 C772.7 566.7 767.4 567.9 761.3 569.4 C755.2 570.9 749.2 572.5 743.2 574.8 C737.2 577.1 731.0 579.9 725.0 583.0 C719.0 586.1 712.7 590.0 707.0 593.5 C701.3 597.0 693.5 602.1 690.8 603.8 Z" fill="rgb(170,198,225)" fill-opacity=".48"/>
 <path d="M690.8 603.8 C693.5 602.1 701.3 597.0 707.0 593.5 C712.7 590.0 719.0 586.1 725.0 583.0 C731.0 579.9 737.2 577.1 743.2 574.8 C749.2 572.5 758.3 570.3 761.3 569.4 L761.3 569.4 C758.9 571.5 751.2 577.3 747.0 582.0 C742.8 586.7 739.1 591.7 736.0 597.5 C732.9 603.3 730.4 609.9 728.5 617.0 C726.6 624.1 724.9 632.5 724.5 640.0 C724.1 647.5 724.8 654.8 726.0 662.0 C727.2 669.2 729.3 675.8 732.0 683.0 C734.7 690.2 738.2 697.7 742.0 705.0 C745.8 712.3 750.3 721.2 755.0 727.0 C759.7 732.8 764.5 737.5 770.0 740.0 C775.5 742.5 785.1 741.9 788.1 742.3 L788.1 742.3 C791.6 741.4 802.4 739.3 809.0 737.0 C815.6 734.7 822.3 731.8 828.0 728.5 C833.7 725.2 838.5 721.4 843.0 717.5 C847.5 713.6 851.2 709.6 855.0 705.0 C858.8 700.4 862.5 695.3 866.0 690.0 C869.5 684.7 873.2 678.3 876.0 673.0 C878.8 667.7 881.3 662.2 883.0 658.0 C884.7 653.8 885.5 649.7 886.0 648.0 L886.0 648.0 C886.2 650.3 887.9 657.2 887.0 662.0 C886.1 666.8 883.3 671.7 880.5 677.0 C877.7 682.3 873.7 688.6 870.0 694.0 C866.3 699.4 862.4 704.9 858.5 709.5 C854.6 714.1 851.1 717.6 846.5 721.5 C841.9 725.4 836.9 729.7 831.0 733.0 C825.1 736.3 817.8 739.2 811.0 741.5 C804.2 743.8 796.5 745.7 790.0 746.5 C783.5 747.3 777.8 747.2 772.0 746.5 C766.2 745.8 761.5 744.9 755.0 742.0 C748.5 739.1 740.1 733.7 733.0 729.0 C725.9 724.3 717.9 719.7 712.2 714.0 C706.5 708.3 702.5 702.7 699.0 695.0 C695.5 687.3 692.8 677.2 691.0 668.0 C689.2 658.8 688.4 648.0 688.0 640.0 C687.6 632.0 688.0 626.0 688.5 620.0 C689.0 614.0 690.4 606.5 690.8 603.8 Z" fill="rgb(95,135,190)" fill-opacity=".26"/>
 <path d="M761.3 569.4 C758.9 571.5 751.2 577.3 747.0 582.0 C742.8 586.7 739.1 591.7 736.0 597.5 C732.9 603.3 729.8 613.8 728.5 617.0 L728.5 617.0 C726.4 616.8 720.2 617.2 716.0 616.0 C711.8 614.8 707.2 612.0 703.0 610.0 C698.8 608.0 692.8 604.8 690.8 603.8 L690.8 603.8 C693.5 602.1 701.3 597.0 707.0 593.5 C712.7 590.0 719.0 586.1 725.0 583.0 C731.0 579.9 737.2 577.1 743.2 574.8 C749.2 572.5 758.3 570.3 761.3 569.4 Z" fill="rgb(110,105,110)" fill-opacity=".16"/>
 <path d="M829.4 571.4 C832.3 572.4 841.1 574.7 847.0 577.5 C852.9 580.3 860.0 584.5 864.6 588.2 C869.2 592.0 872.9 598.0 874.5 600.0 L874.5 600.0 C874.6 602.0 876.1 607.7 875.0 612.0 C873.9 616.3 872.2 621.5 868.0 626.0 C863.8 630.5 856.0 635.2 850.0 639.0 C844.0 642.8 837.9 646.0 832.0 649.0 C826.1 652.0 819.8 655.0 814.5 657.2 C809.2 659.4 804.4 660.0 800.0 662.0 C795.6 664.0 792.0 666.2 788.0 669.0 C784.0 671.8 779.5 675.5 776.0 679.0 C772.5 682.5 768.5 688.2 767.0 690.0 L767.0 690.0 C766.1 691.3 762.9 695.0 761.6 698.0 C760.3 701.0 759.4 704.1 759.2 707.7 C759.0 711.3 759.4 715.7 760.4 719.7 C761.4 723.7 762.9 728.3 765.2 731.7 C767.5 735.1 770.2 738.2 774.0 740.0 C777.8 741.8 785.8 741.9 788.1 742.3 L788.1 742.3 C785.1 741.9 775.5 742.5 770.0 740.0 C764.5 737.5 759.7 732.8 755.0 727.0 C750.3 721.2 745.8 712.3 742.0 705.0 C738.2 697.7 734.0 687.2 732.0 683.0 C730.0 678.8 729.3 683.2 730.3 680.0 C731.3 676.8 734.8 669.3 738.0 664.0 C741.2 658.7 745.3 653.3 749.6 648.0 C753.9 642.7 758.3 637.1 764.0 632.0 C769.7 626.9 777.2 621.6 784.0 617.5 C790.8 613.4 798.8 610.6 805.0 607.5 C811.2 604.4 816.5 601.8 821.0 599.0 C825.5 596.2 829.6 593.2 832.0 590.5 C834.4 587.8 835.7 586.2 835.3 583.0 C834.9 579.8 830.4 573.3 829.4 571.4 Z" fill="url(#wg)"/>
 <path d="M767.0 690.0 C766.1 691.3 762.9 695.0 761.6 698.0 C760.3 701.0 759.4 704.1 759.2 707.7 C759.0 711.3 759.4 715.7 760.4 719.7 C761.4 723.7 762.9 728.3 765.2 731.7 C767.5 735.1 770.2 738.2 774.0 740.0 C777.8 741.8 785.8 741.9 788.1 742.3 L788.1 742.3 C791.6 741.4 802.4 739.3 809.0 737.0 C815.6 734.7 822.3 731.8 828.0 728.5 C833.7 725.2 838.5 721.4 843.0 717.5 C847.5 713.6 851.2 709.6 855.0 705.0 C858.8 700.4 862.5 695.3 866.0 690.0 C869.5 684.7 873.2 678.3 876.0 673.0 C878.8 667.7 881.3 662.2 883.0 658.0 C884.7 653.8 885.5 649.7 886.0 648.0 L886.0 648.0 C885.0 650.0 882.6 655.8 880.3 660.0 C878.0 664.2 875.2 669.1 872.3 673.3 C869.4 677.5 866.3 681.7 863.0 685.2 C859.7 688.7 856.4 691.6 852.4 694.5 C848.4 697.4 843.9 700.5 839.0 702.5 C834.1 704.5 829.2 705.8 823.2 706.5 C817.2 707.2 809.9 707.5 803.2 706.5 C796.6 705.5 789.3 703.2 783.3 700.5 C777.3 697.8 769.7 691.8 767.0 690.0 Z" fill="rgb(75,105,148)" fill-opacity=".39"/>
</svg>
<div class="abs" style="left:883px;top:39px;width:3.500px;height:710px;background:#e4eef8"></div>
<div class="abs" style="left:1px;top:0;width:2.500px;height:749px;background:#d6e8f6"></div>
<div class="abs" style="left:0;top:744px;width:888px;height:3.500px;background:#cfe2f2"></div>
<div class="abs" style="left:0;top:747.500px;width:888px;height:1.500px;background:#3f7fae"></div>
<div class="abs" style="left:0;top:0;width:1px;height:749px;background:#4a87ab"></div>
<div class="abs" style="left:886.500px;top:0;width:1.500px;height:749px;background:#3f86c0"></div>
<div class="abs" style="left:0;top:0;width:888px;height:1px;background:#3580b0"></div>
</div></body></html>
